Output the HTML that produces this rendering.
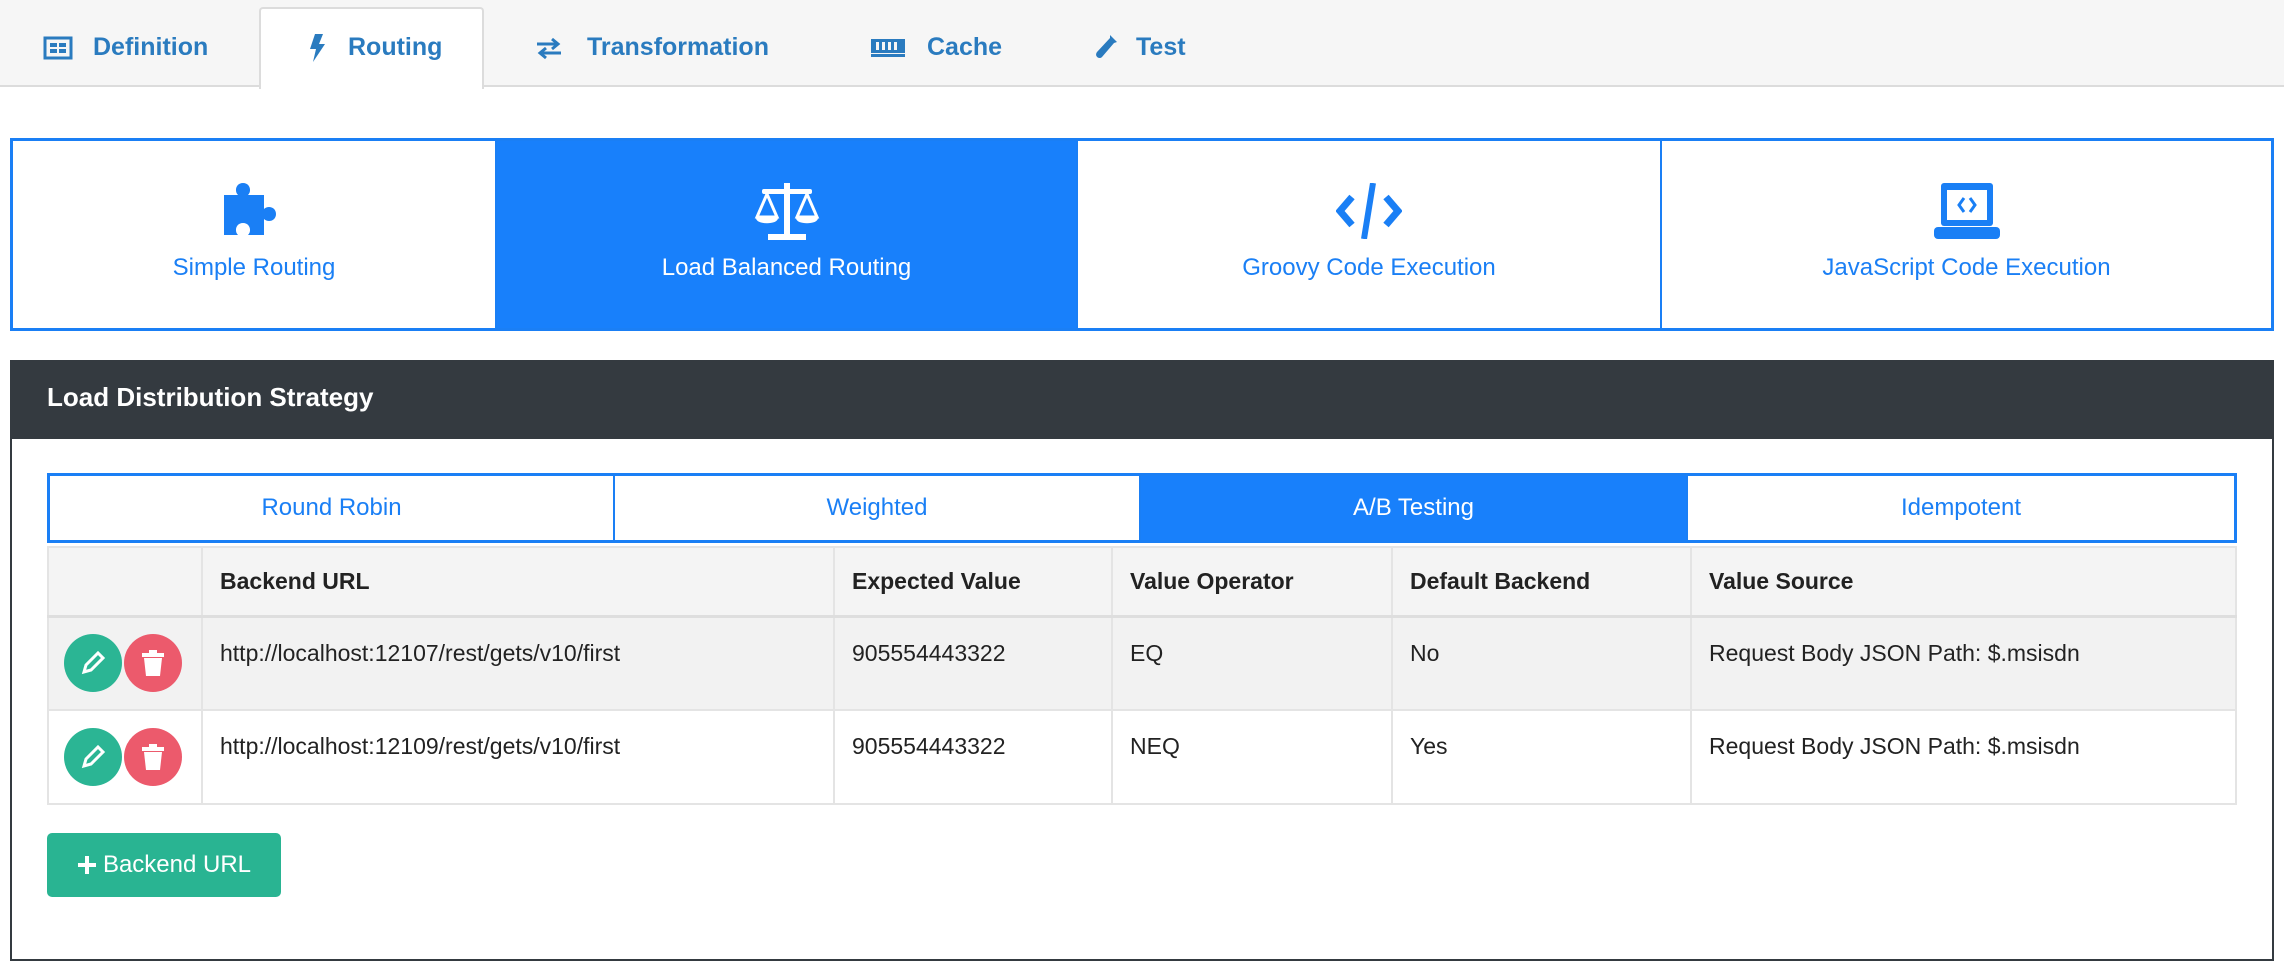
<!DOCTYPE html>
<html><head><meta charset="utf-8"><style>
*{box-sizing:border-box;margin:0;padding:0}
body{width:2284px;height:970px;background:#fff;font-family:"Liberation Sans",sans-serif;position:relative;overflow:hidden}
.abs{position:absolute}
.tabbar{left:0;top:0;width:2284px;height:87px;background:#f6f6f6;border-bottom:2px solid #dcdcdc}
.tab{position:absolute;top:33px;font-size:25px;font-weight:bold;color:#2a7bbf;display:flex;align-items:center;gap:14px}
.active{left:259px;top:7px;width:225px;height:82px;background:#fff;border:2px solid #dcdcdc;border-bottom:none;border-radius:4px 4px 0 0}
.cards{left:10px;top:138px;width:2264px;height:193px;border:3px solid #1a7ff5;display:flex}
.card{height:100%;border-right:2px solid #1a7ff5;position:relative;color:#1a7ff5;font-size:24px;text-align:center}
.card:last-child{border-right:none}
.card .ic{position:absolute;left:0;right:0;top:42px;height:56px;display:flex;justify-content:center}
.card .lb{position:absolute;left:0;right:0;top:113px}
.panel{left:10px;top:360px;width:2264px;height:601px;border:2px solid #343a40}
.ph{height:77px;background:#343a40;color:#fff;font-weight:bold;font-size:26px;padding:20px 0 0 35px}
.st{left:47px;top:473px;width:2190px;height:70px;border:3px solid #1a7ff5;display:flex}
.st div{height:100%;border-right:2px solid #1a7ff5;color:#1a7ff5;font-size:24px;text-align:center;line-height:63px}
.st div:last-child{border-right:none}
table{position:absolute;left:47px;top:546px;width:2190px;border-collapse:collapse;font-size:23px;color:#222}
td,th{border:2px solid #e4e4e4;text-align:left;vertical-align:top;padding:0 17px}
th{height:69px;background:#f4f4f4;font-weight:bold;vertical-align:middle;border-bottom:3px solid #dedede}
td{height:94px;padding-top:22px}
tr.a td{background:#f2f2f2}
.bt{position:absolute;width:58px;height:58px;border-radius:50%;display:flex;align-items:center;justify-content:center}
.add{left:47px;top:833px;width:234px;height:64px;background:#29b492;border-radius:5px;color:#fff;font-size:24px;display:flex;align-items:center;justify-content:center;gap:6px}
</style></head><body>
<div class="abs tabbar"></div>
<div class="abs active"></div>
<div class="tab" style="left:43px"><svg width="30" height="24" viewBox="0 0 30 24"><rect x="2" y="2" width="26" height="20" fill="none" stroke="#2a7bbf" stroke-width="3"/><rect x="7" y="7" width="7" height="4" fill="#2a7bbf"/><rect x="16" y="7" width="7" height="4" fill="#2a7bbf"/><rect x="7" y="13" width="7" height="4" fill="#2a7bbf"/><rect x="16" y="13" width="7" height="4" fill="#2a7bbf"/></svg><span style="margin-left:6px">Definition</span></div>
<div class="tab" style="left:308px"><svg width="18" height="28" viewBox="0 0 18 28"><path d="M7 0h8l-4 10h6L5 28l3-13H2z" fill="#2a7bbf"/></svg><span style="margin-left:8px">Routing</span></div>
<div class="tab" style="left:535px"><svg width="28" height="24" viewBox="0 0 28 24"><path d="M2 8h20M17 3l6 5-6 5M26 17H6M11 12l-6 5 6 5" fill="none" stroke="#2a7bbf" stroke-width="3"/></svg><span style="margin-left:10px">Transformation</span></div>
<div class="tab" style="left:871px"><svg width="34" height="22" viewBox="0 0 34 22"><rect x="0" y="2" width="34" height="14" fill="#2a7bbf"/><rect x="5" y="5" width="3" height="8" fill="#f6f6f6"/><rect x="11" y="5" width="3" height="8" fill="#f6f6f6"/><rect x="17" y="5" width="3" height="8" fill="#f6f6f6"/><rect x="23" y="5" width="3" height="8" fill="#f6f6f6"/><rect x="0" y="17" width="34" height="3" fill="#2a7bbf"/></svg><span style="margin-left:8px">Cache</span></div>
<div class="tab" style="left:1094px"><svg width="24" height="28" viewBox="0 0 24 28"><path d="M16 1l7 7-3 1-12 14c-3 3-8-1-5-5L16 4z" fill="#2a7bbf"/></svg><span style="margin-left:4px">Test</span></div>

<div class="abs cards">
<div class="card" style="width:484px"><div class="ic"><svg width="60" height="56" viewBox="0 0 60 56"><path d="M0 12h14c-4-4-2-12 5-12s9 8 5 12h16v14c4-4 12-2 12 5s-8 9-12 5v16H24c4-4 2-12-5-12s-9 8-5 12H0z" fill="#1a7ff5"/></svg></div><div class="lb">Simple Routing</div></div>
<div class="card" style="width:581px;background:#1880fb;color:#fff"><div class="ic"><svg width="66" height="58" viewBox="0 0 66 58"><rect x="30" y="0" width="6" height="52" fill="#fff"/><rect x="8" y="6" width="50" height="5" rx="2" fill="#fff"/><rect x="14" y="51" width="38" height="6" fill="#fff"/><path d="M13 11L3 34h20z M53 11L43 34h20z" fill="none" stroke="#fff" stroke-width="3"/><path d="M2 35h22c0 7-22 7-22 0zM42 35h22c0 7-22 7-22 0z" fill="#fff"/></svg></div><div class="lb">Load Balanced Routing</div></div>
<div class="card" style="width:584px"><div class="ic"><svg width="66" height="56" viewBox="0 0 66 56"><path d="M16 14L4 28l12 14M50 14l12 14-12 14" fill="none" stroke="#1a7ff5" stroke-width="7"/><path d="M37 0L28 56" stroke="#1a7ff5" stroke-width="6"/></svg></div><div class="lb">Groovy Code Execution</div></div>
<div class="card" style="flex:1"><div class="ic"><svg width="66" height="56" viewBox="0 0 66 56"><rect x="7" y="0" width="52" height="43" rx="3" fill="#1a7ff5"/><rect x="13" y="7" width="40" height="30" fill="#fff"/><rect x="0" y="44" width="66" height="12" rx="4" fill="#1a7ff5"/><path d="M30 15l-5 7 5 7M36 15l5 7-5 7" fill="none" stroke="#1a7ff5" stroke-width="3"/></svg></div><div class="lb">JavaScript Code Execution</div></div>
</div>

<div class="abs panel"><div class="ph">Load Distribution Strategy</div></div>
<div class="abs st">
<div style="width:565px">Round Robin</div>
<div style="width:526px">Weighted</div>
<div style="width:547px;background:#1880fb;color:#fff">A/B Testing</div>
<div style="flex:1">Idempotent</div>
</div>
<table>
<tr><th style="width:154px"></th><th style="width:632px">Backend URL</th><th style="width:278px">Expected Value</th><th style="width:280px">Value Operator</th><th style="width:299px">Default Backend</th><th>Value Source</th></tr>
<tr class="a"><td></td><td>http://localhost:12107/rest/gets/v10/first</td><td>905554443322</td><td>EQ</td><td>No</td><td>Request Body JSON Path: $.msisdn</td></tr>
<tr><td></td><td>http://localhost:12109/rest/gets/v10/first</td><td>905554443322</td><td>NEQ</td><td>Yes</td><td>Request Body JSON Path: $.msisdn</td></tr>
</table>
<div class="bt" style="left:64px;top:634px;background:#2bb594"><svg width="26" height="26" viewBox="0 0 26 26"><path d="M4 22l2-7L18 3l5 5L11 20z" fill="none" stroke="#fff" stroke-width="3"/></svg></div>
<div class="bt" style="left:124px;top:634px;background:#ec5a6c"><svg width="22" height="26" viewBox="0 0 22 26"><rect x="0" y="3" width="22" height="4" fill="#fff"/><rect x="7" y="0" width="8" height="4" fill="#fff"/><path d="M2 8h18l-2 18H4z" fill="#fff"/></svg></div>
<div class="bt" style="left:64px;top:728px;background:#2bb594"><svg width="26" height="26" viewBox="0 0 26 26"><path d="M4 22l2-7L18 3l5 5L11 20z" fill="none" stroke="#fff" stroke-width="3"/></svg></div>
<div class="bt" style="left:124px;top:728px;background:#ec5a6c"><svg width="22" height="26" viewBox="0 0 22 26"><rect x="0" y="3" width="22" height="4" fill="#fff"/><rect x="7" y="0" width="8" height="4" fill="#fff"/><path d="M2 8h18l-2 18H4z" fill="#fff"/></svg></div>
<div class="abs add"><svg width="20" height="20" viewBox="0 0 20 20"><path d="M10 1v18M1 10h18" stroke="#fff" stroke-width="4"/></svg>Backend URL</div>
</body></html>
